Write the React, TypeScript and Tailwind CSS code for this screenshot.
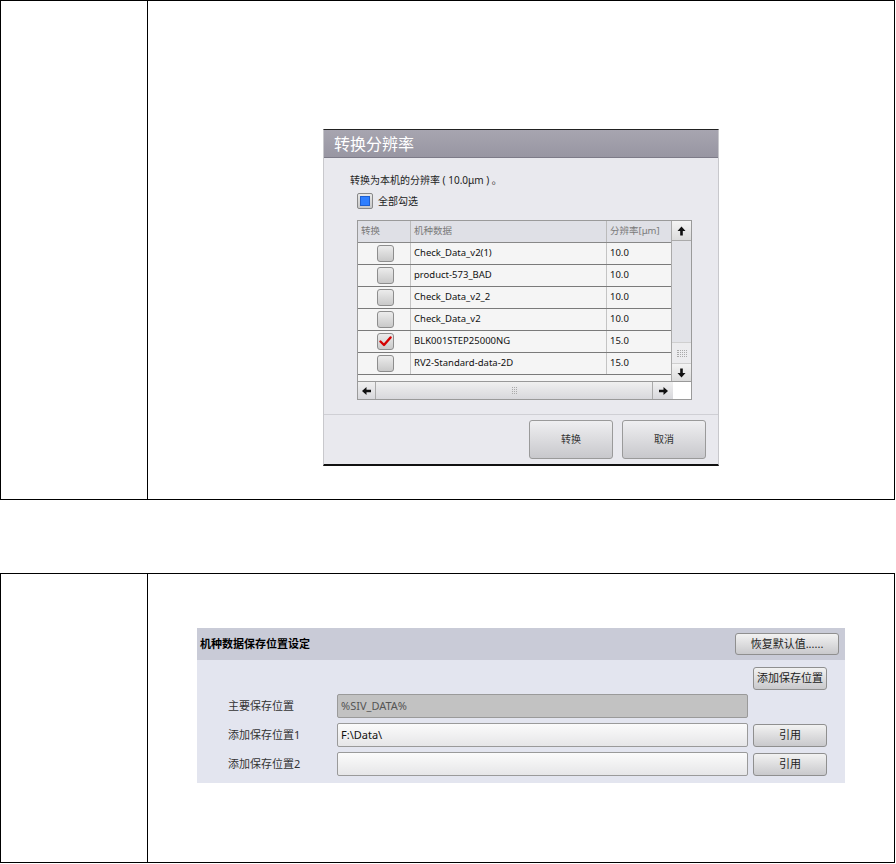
import React from 'react'

const FONT = '"Noto Sans", "Noto Sans CJK SC", sans-serif'

const rows = [
  { name: 'Check_Data_v2(1)', res: '10.0', checked: false },
  { name: 'product-573_BAD', res: '10.0', checked: false },
  { name: 'Check_Data_v2_2', res: '10.0', checked: false },
  { name: 'Check_Data_v2', res: '10.0', checked: false },
  { name: 'BLK001STEP25000NG', res: '15.0', checked: true },
  { name: 'RV2-Standard-data-2D', res: '15.0', checked: false },
]

function RowCheck({ checked }: { checked: boolean }) {
  return (
    <div className="w-[17px] h-[17px] rounded-[3px] border border-[#8d8d8d] bg-gradient-to-b from-[#ececec] to-[#c9c9c9] flex items-center justify-center">
      {checked && (
        <svg width="13" height="11" viewBox="0 0 13 11">
          <path d="M1.5 5.5 L5 9 L11.5 1.5" fill="none" stroke="#d40000" strokeWidth="2.4" strokeLinecap="round" strokeLinejoin="round" />
        </svg>
      )}
    </div>
  )
}

function Arrow({ dir }: { dir: 'up' | 'down' | 'left' | 'right' }) {
  const rot = { up: 0, right: 90, down: 180, left: 270 }[dir]
  return (
    <svg width="9" height="10" viewBox="0 0 9 10" style={{ transform: `rotate(${rot}deg)` }}>
      <path d="M4.5 0.5 L8.5 5 L5.8 5 L5.8 9.5 L3.2 9.5 L3.2 5 L0.5 5 Z" fill="#111" />
    </svg>
  )
}

function Grip({ vertical }: { vertical?: boolean }) {
  return (
    <div className={vertical ? 'flex flex-col gap-[1px]' : 'flex flex-col gap-[1px]'}>
      {[0, 1, 2, 3].map((i) => (
        <div key={i} className={vertical ? 'w-[10px] h-[1px] border-t border-dotted border-[#aaa]' : 'w-[5px] h-[1px] border-t border-dotted border-[#aaa]'} />
      ))}
    </div>
  )
}

function ResolutionDialog() {
  return (
    <div className="w-[396px] h-[337px] flex flex-col bg-[#e9e9ee] border-t border-[#222] border-b-2 border-b-[#111] border-x border-x-[#c8c8cc]">
      <div className="h-[28px] bg-gradient-to-b from-[#a7a5b0] to-[#9896a2] border-b border-[#7d7b88] flex items-center pl-[10px]">
        <span className="text-white text-[16px] leading-none">转换分辨率</span>
      </div>
      <div className="flex-1 flex flex-col pl-[26px]">
        <div className="mt-[15px] h-[14px] text-[10px] leading-[14px] text-[#222]">转换为本机的分辨率 ( 10.0μm ) 。</div>
        <div className="mt-[6px] flex items-center gap-[5px] pl-[7px]">
          <div className="w-[16px] h-[16px] rounded-[2px] border border-[#888] bg-gradient-to-b from-[#e8e8e8] to-[#c8c8c8] flex items-center justify-center">
            <div className="w-[10px] h-[10px] bg-[#2f7fff] border border-[#1e5fd0]" />
          </div>
          <span className="text-[10px] text-[#222]">全部勾选</span>
        </div>
        <div className="mt-[11px] ml-[7px] w-[335px] h-[180px] flex flex-col border border-[#9a9a9a] bg-white">
          <div className="flex h-[161px]">
            <div className="w-[315px] flex flex-col bg-[#f5f5f5]">
              <div className="h-[22px] flex bg-[#dfe0e6] border-b border-[#888] text-[9.5px] text-[#7a7a7a]">
                <div className="w-[53px] border-r border-[#bbb] flex items-center pl-[3px]">转换</div>
                <div className="w-[196px] border-r border-[#bbb] flex items-center pl-[3px]">机种数据</div>
                <div className="flex-1 flex items-center pl-[3px]">分辨率[μm]</div>
              </div>
              {rows.map((r) => (
                <div key={r.name} className="h-[22px] flex border-b border-[#7a7a7a] text-[9.5px] text-[#111]">
                  <div className="w-[53px] border-r border-[#c4c4c4] flex items-center justify-center pl-[2px]">
                    <RowCheck checked={r.checked} />
                  </div>
                  <div className="w-[196px] border-r border-[#c4c4c4] flex items-center pl-[3px]">{r.name}</div>
                  <div className="flex-1 flex items-center pl-[3px]">{r.res}</div>
                </div>
              ))}
            </div>
            <div className="w-[20px] flex flex-col bg-[#e2e3e8] border-l border-[#aaa]">
              <div className="h-[20px] bg-gradient-to-b from-[#f4f4f4] to-[#dcdcdc] border-b border-[#aaa] flex items-center justify-center">
                <Arrow dir="up" />
              </div>
              <div className="flex-1" />
              <div className="h-[22px] bg-[#ececee] border-y border-[#cfcfcf] flex items-center justify-center">
                <Grip vertical />
              </div>
              <div className="h-[17px] bg-gradient-to-b from-[#f4f4f4] to-[#dcdcdc] flex items-center justify-center">
                <Arrow dir="down" />
              </div>
            </div>
          </div>
          <div className="flex h-[18px] border-t border-[#999]">
            <div className="w-[315px] flex bg-gradient-to-b from-[#f0f0f0] to-[#d8d8dc]">
              <div className="w-[18px] flex items-center justify-center border-r border-[#aaa]">
                <Arrow dir="left" />
              </div>
              <div className="flex-1 flex items-center justify-center">
                <Grip />
              </div>
              <div className="w-[21px] flex items-center justify-center border-l border-[#aaa]">
                <Arrow dir="right" />
              </div>
            </div>
            <div className="flex-1 bg-white" />
          </div>
        </div>
      </div>
      <div className="h-[50px] border-t border-[#cfcfd4] flex justify-end items-start gap-[9px] pr-[12px] pt-[5px]">
        <button className="w-[84px] h-[39px] rounded-[3px] border border-[#9a9a9a] bg-gradient-to-b from-[#efeff1] to-[#c8c8cc] text-[10px] text-[#333]">转换</button>
        <button className="w-[84px] h-[39px] rounded-[3px] border border-[#9a9a9a] bg-gradient-to-b from-[#efeff1] to-[#c8c8cc] text-[10px] text-[#333]">取消</button>
      </div>
    </div>
  )
}

function SmallButton({ label, w, h }: { label: string; w: number; h: number }) {
  return (
    <button
      className="rounded-[3px] border border-[#8f8f8f] bg-gradient-to-b from-[#f2f2f2] to-[#c9c9cc] text-[11px] text-[#222] flex items-center justify-center"
      style={{ width: w, height: h }}
    >
      {label}
    </button>
  )
}

function StoragePanel() {
  return (
    <div className="w-[648px] h-[155px] flex flex-col bg-[#e3e5ef]">
      <div className="h-[32px] bg-[#c9cbd7] flex items-center justify-between pl-[3px] pr-[6px]">
        <span className="text-[11px] font-bold text-black">机种数据保存位置设定</span>
        <SmallButton label="恢复默认值......" w={104} h={22} />
      </div>
      <div className="flex justify-end pr-[18px] pt-[7px]">
        <SmallButton label="添加保存位置" w={74} h={23} />
      </div>
      <div className="flex flex-col gap-[5px] pt-[4px]">
        <div className="flex items-center h-[24px]">
          <div className="w-[140px] pl-[31px] text-[11px] text-[#333]">主要保存位置</div>
          <div className="w-[411px] h-[24px] rounded-[2px] border border-[#9a9a9a] bg-[#c2c2c2] flex items-center pl-[3px] text-[11px] text-[#555]">%SIV_DATA%</div>
        </div>
        <div className="flex items-center h-[24px]">
          <div className="w-[140px] pl-[31px] text-[11px] text-[#333]">添加保存位置1</div>
          <div className="w-[411px] h-[24px] rounded-[2px] border border-[#9a9a9a] bg-gradient-to-b from-[#fbfbfb] to-[#e6e6e8] flex items-center pl-[3px] text-[11px] text-[#111]">F:\Data\</div>
          <div className="ml-[5px]">
            <SmallButton label="引用" w={74} h={23} />
          </div>
        </div>
        <div className="flex items-center h-[24px]">
          <div className="w-[140px] pl-[31px] text-[11px] text-[#333]">添加保存位置2</div>
          <div className="w-[411px] h-[24px] rounded-[2px] border border-[#9a9a9a] bg-gradient-to-b from-[#fbfbfb] to-[#e6e6e8]" />
          <div className="ml-[5px]">
            <SmallButton label="引用" w={74} h={23} />
          </div>
        </div>
      </div>
    </div>
  )
}

export default function App() {
  return (
    <div className="w-[896px] h-[864px] bg-white flex flex-col" style={{ fontFamily: FONT }}>
      <div className="w-[895px] h-[500px] grid grid-cols-[147px_1fr] border border-black">
        <div className="border-r border-black" />
        <div className="pt-[128px] pl-[175px]">
          <ResolutionDialog />
        </div>
      </div>
      <div className="mt-[73px] w-[895px] h-[290px] grid grid-cols-[147px_1fr] border border-black">
        <div className="border-r border-black" />
        <div className="pt-[54px] pl-[49px]">
          <StoragePanel />
        </div>
      </div>
    </div>
  )
}
